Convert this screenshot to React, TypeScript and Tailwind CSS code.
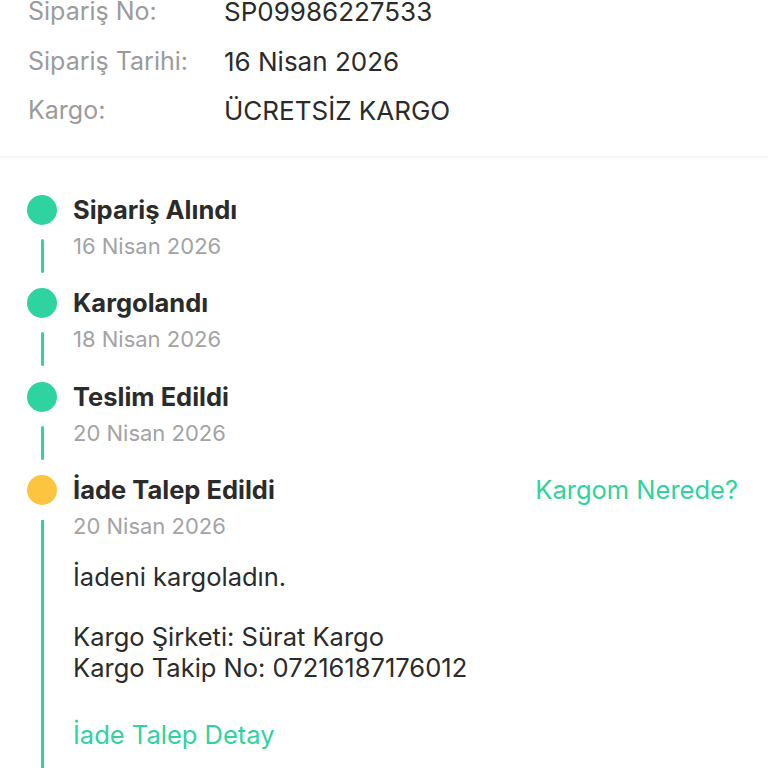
const orderInfo = [
  { label: 'Sipariş No:', value: 'SP09986227533' },
  { label: 'Sipariş Tarihi:', value: '16 Nisan 2026' },
  { label: 'Kargo:', value: 'ÜCRETSİZ KARGO' },
];

const steps = [
  { title: 'Sipariş Alındı', date: '16 Nisan 2026' },
  { title: 'Kargolandı', date: '18 Nisan 2026' },
  { title: 'Teslim Edildi', date: '20 Nisan 2026' },
];

export default function App() {
  return (
    <div className="h-[768px] w-[768px] overflow-hidden bg-white text-[#2b2b2b] font-['Inter','Liberation_Sans',sans-serif]">
      {/* Order info */}
      <div className="-mt-[13px] px-[28px] pb-[20px]">
        {orderInfo.map((row) => (
          <div key={row.label} className="flex h-[49.5px] items-center">
            <span className="w-[196px] text-[25px] text-[#9b9b9b]">{row.label}</span>
            <span className="text-[26px] text-[#2b2b2b]">{row.value}</span>
          </div>
        ))}
      </div>
      <div className="h-[2px] bg-[#f6f6f6]" />

      {/* Timeline */}
      <div className="pl-[27px] pr-[30px] pt-[37px]">
        {steps.map((step) => (
          <div key={step.title} className="flex h-[93.5px] gap-[16px]">
            <div className="flex w-[30px] flex-col items-center">
              <div className="h-[30px] w-[30px] rounded-full bg-[#2fd3a0]" />
              <div className="mt-[14px] h-[34px] w-[3px] rounded-full bg-[#2fd3a0]" />
            </div>
            <div className="flex flex-col">
              <span className="h-[30px] text-[25.5px] leading-[30px] font-bold">{step.title}</span>
              <span className="mt-[8px] text-[22px] leading-[26px] text-[#a3a3a3]">{step.date}</span>
            </div>
          </div>
        ))}
        <div className="flex gap-[16px]">
          <div className="flex w-[30px] flex-col items-center">
            <div className="h-[30px] w-[30px] rounded-full bg-[#fdc43f]" />
            <div className="mt-[15px] h-[300px] w-[3px] bg-[#2fd3a0]" />
          </div>
          <div className="flex flex-1 flex-col">
            <div className="flex h-[30px] items-center justify-between">
              <span className="text-[25.5px] font-bold">İade Talep Edildi</span>
              <span className="text-[25.5px] text-[#2fd3a0]">Kargom Nerede?</span>
            </div>
            <span className="mt-[8px] text-[22px] leading-[26px] text-[#a3a3a3]">20 Nisan 2026</span>
            <p className="mt-[21.5px] text-[25.5px] leading-[31px]">İadeni kargoladın.</p>
            <p className="mt-[29px] text-[25.5px] leading-[31px]">
              Kargo Şirketi: Sürat Kargo
              <br />
              Kargo Takip No: 07216187176012
            </p>
            <span className="mt-[36px] text-[25.5px] leading-[31px] text-[#2fd3a0]">İade Talep Detay</span>
          </div>
        </div>
      </div>
    </div>
  );
}
